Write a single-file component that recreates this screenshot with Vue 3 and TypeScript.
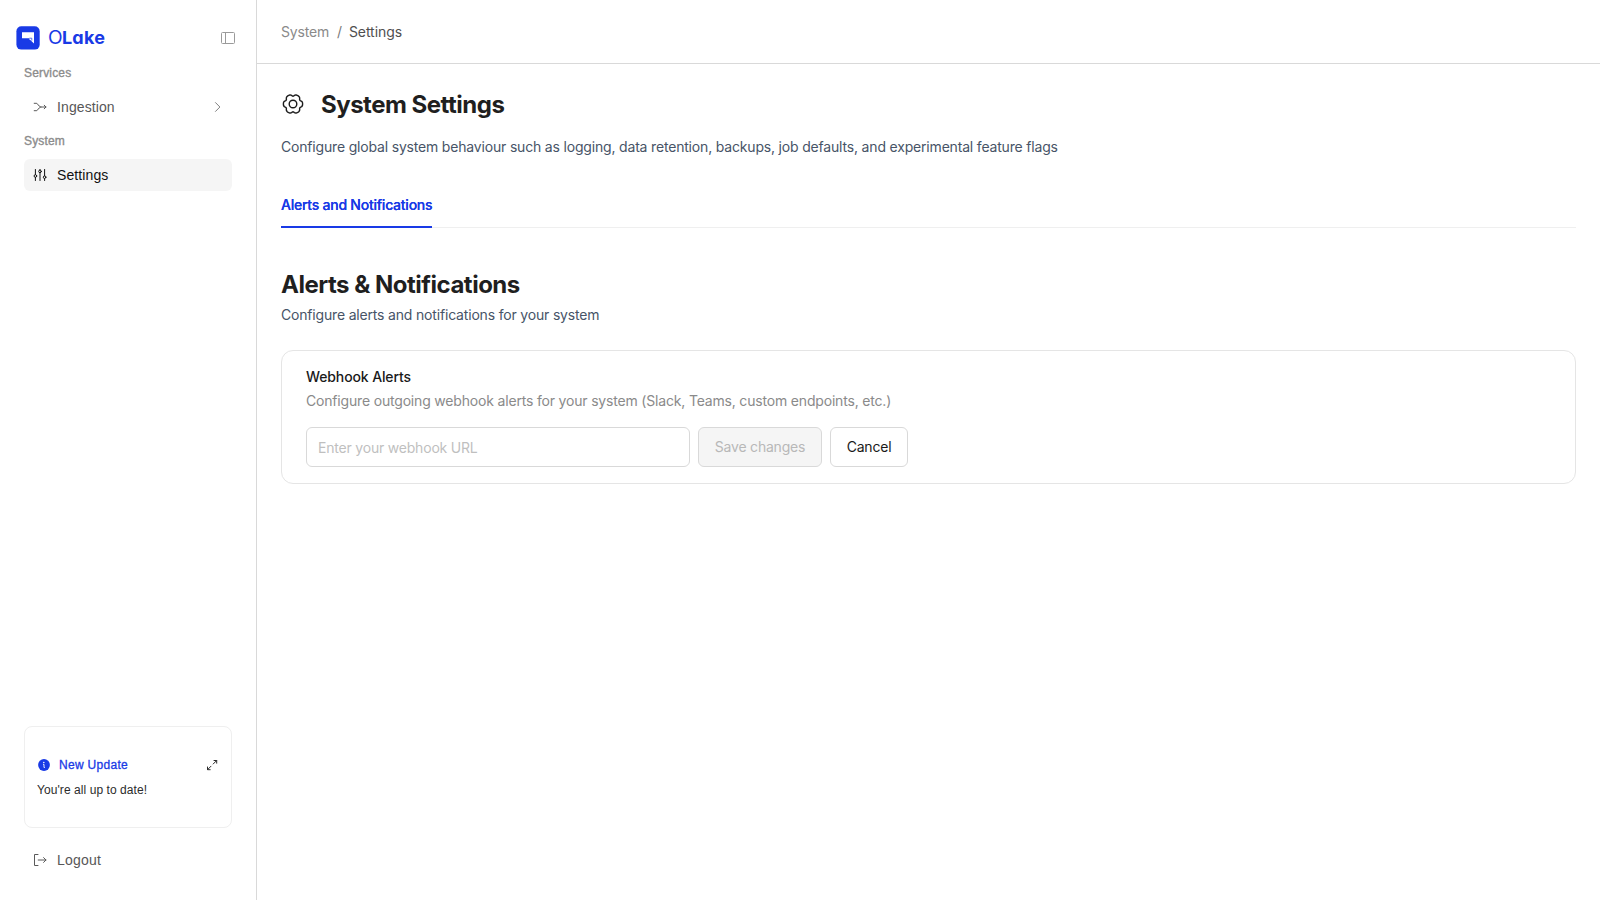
<script setup lang="ts">
import { ref } from 'vue'

const webhookUrl = ref('')

// Outline of the six-lobed gear, sampled in polar coordinates.
const gearOutline = (() => {
  const points: string[] = []
  for (let i = 0; i < 144; i++) {
    const a = (i / 144) * Math.PI * 2
    const dip = Math.pow((1 - Math.cos(6 * a)) / 2, 2.4)
    const r = 9.6 - 1.8 * dip
    points.push(`${(12 + r * Math.cos(a)).toFixed(2)} ${(12 + r * Math.sin(a)).toFixed(2)}`)
  }
  return `M${points.join('L')}Z`
})()
</script>

<template>
  <div class="app">
    <aside class="sidebar">
      <div class="brand">
        <svg class="mark" width="24" height="24" viewBox="0 0 24 24">
          <rect x="0.4" y="0.2" width="23.3" height="23.4" rx="5" fill="#193ae6" />
          <path d="M6 6.2h12v11.4l-4-3.8h-.6v-1.6H6z" fill="#fff" />
          <path d="M13.4 12.2h2.4v2.4" fill="none" stroke="#193ae6" stroke-width=".7" />
        </svg>
        <div class="wordmark"><span class="o">O</span><span class="lake">Lake</span></div>
        <svg class="collapse" width="14" height="12" viewBox="0 0 14 12" fill="none" stroke="#9a9a9a">
          <rect x=".5" y=".5" width="13" height="11" rx="1" />
          <path d="M4.5 .5v11" />
        </svg>
      </div>

      <div class="group">Services</div>
      <a class="item">
        <svg width="14" height="14" viewBox="0 0 14 14" fill="none" stroke="#5a5a5a" stroke-linecap="round" stroke-linejoin="round">
          <path d="M1.2 3.3H3.8L6.2 6Q7 7 8 7H13M1.2 10.7H3.8L6.2 8Q7 7 8 7M11.2 5.2L13 7l-1.8 1.8" />
        </svg>
        <span>Ingestion</span>
        <svg class="chevron" width="8" height="12" viewBox="0 0 8 12" fill="none" stroke="#808080" stroke-linecap="round" stroke-linejoin="round">
          <path d="M1.5 1.6L5.9 6l-4.4 4.4" />
        </svg>
      </a>
      <div class="group">System</div>
      <a class="item active">
        <svg width="14" height="14" viewBox="0 0 14 14" fill="none" stroke="#111" stroke-linecap="round">
          <path d="M2.4 1.5v5M2.4 9.5v3M7 1.5v.3M7 4.8v7.7M11.6 1.5v6.3M11.6 10.8v1.7" />
          <circle cx="2.4" cy="8" r="1.3" />
          <circle cx="7" cy="3.4" r="1.3" />
          <circle cx="11.6" cy="9.2" r="1.3" />
        </svg>
        <span>Settings</span>
      </a>

      <div class="spacer"></div>

      <section class="update">
        <div class="update-head">
          <svg width="12" height="12" viewBox="0 0 12 12">
            <circle cx="6" cy="6" r="5.9" fill="#193ae6" />
            <circle cx="5.8" cy="3.5" r=".75" fill="#fff" />
            <path d="M5.1 5.4H6V8.5H6.8" fill="none" stroke="#fff" stroke-width=".9" />
          </svg>
          <span>New Update</span>
          <svg class="expand" width="12" height="12" viewBox="0 0 12 12" fill="none" stroke="#2b2b2b" stroke-linecap="round" stroke-linejoin="round">
            <path d="M8 1.5h2.7v2.7M10.7 1.5L7.2 5M4.2 10.7H1.5V8M1.5 10.7L5 7.2" />
          </svg>
        </div>
        <p>You're all up to date!</p>
      </section>

      <a class="item logout">
        <svg width="14" height="14" viewBox="0 0 14 14" fill="none" stroke="#5a5a5a" stroke-linecap="round" stroke-linejoin="round">
          <path d="M5 1.5H1.5v11H5M5.2 7H13M10.6 4.6L13 7l-2.4 2.4" />
        </svg>
        <span>Logout</span>
      </a>
    </aside>

    <main class="main">
      <header class="crumbs">
        <span class="c-parent">System</span><span class="c-sep">/</span><span class="c-current">Settings</span>
      </header>

      <div class="content">
        <div class="title">
          <svg width="24" height="24" viewBox="0 0 24 24" fill="none" stroke="#1c1c1c" stroke-width="1.4" stroke-linejoin="round">
            <path :d="gearOutline" />
            <circle cx="12" cy="12" r="3.8" />
          </svg>
          <h1>System Settings</h1>
        </div>
        <p class="lead">Configure global system behaviour such as logging, data retention, backups, job defaults, and experimental feature flags</p>

        <nav class="tabs"><a class="tab">Alerts and Notifications</a></nav>

        <h2>Alerts &amp; Notifications</h2>
        <p class="sub">Configure alerts and notifications for your system</p>

        <section class="card">
          <h3>Webhook Alerts</h3>
          <p class="hint">Configure outgoing webhook alerts for your system (Slack, Teams, custom endpoints, etc.)</p>
          <div class="form">
            <input v-model="webhookUrl" type="text" placeholder="Enter your webhook URL" />
            <button class="save" disabled>Save changes</button>
            <button class="cancel">Cancel</button>
          </div>
        </section>
      </div>
    </main>
  </div>
</template>

<style>
body { margin: 0; }
</style>

<style scoped>
* { box-sizing: border-box; }
h1, h2, h3, p { margin: 0; }
.app {
  display: flex;
  height: 100vh;
  background: #fff;
  font-family: Inter, sans-serif;
  font-size: 14px;
  line-height: 22px;
  letter-spacing: -.18px;
}
.sidebar {
  display: flex;
  flex-direction: column;
  flex: none;
  width: 257px;
  padding: 26px 24px 24px;
  border-right: 1px solid #d9d9d9;
  font-family: "Liberation Sans", sans-serif;
  letter-spacing: .1px;
}
.brand {
  display: flex;
  align-items: center;
  height: 24px;
  margin: 0 -3px 13px -8px;
}
.wordmark {
  display: flex;
  margin-left: 8px;
  color: #193ae6;
  font-family: Inter, sans-serif;
  font-size: 18px;
  line-height: 24px;
  letter-spacing: .2px;
  font-feature-settings: "cv11";
}
.o { display: inline-block; transform: translateX(.4px) scaleX(1.06); }
.lake { font-weight: 700; }
.collapse { margin-left: auto; }
.group {
  height: 20px;
  color: #8c8c8c;
  font-size: 12px;
  line-height: 20px;
  letter-spacing: .17px;
  -webkit-text-stroke: .35px #8c8c8c;
}
.item {
  display: flex;
  flex: none;
  align-items: center;
  height: 32px;
  margin: 8px 0;
  padding: 0 10px 0 9px;
  gap: 10px;
  border-radius: 6px;
  color: #575757;
  line-height: 32px;
}
.item.active { background: #f5f5f5; color: #111; }
.chevron { margin-left: auto; }
.spacer { flex: 1; }
.update {
  flex: none;
  height: 102px;
  padding: 28px 13px 0 12px;
  border: 1px solid #efefef;
  border-radius: 8px;
  font-size: 12px;
  line-height: 20px;
}
.update-head {
  display: flex;
  align-items: center;
  gap: 9px;
  padding-left: 1px;
  margin-bottom: 5px;
  color: #193ae6;
  letter-spacing: .3px;
  -webkit-text-stroke: .3px #193ae6;
}
.expand { margin-left: auto; }
.update p { color: #2b2b2b; letter-spacing: .07px; }
.logout { margin: 16px 0 0; letter-spacing: .2px; }

.main { flex: 1; min-width: 0; }
.crumbs {
  display: flex;
  align-items: center;
  height: 64px;
  padding-left: 24px;
  border-bottom: 1px solid #d9d9d9;
}
.c-parent { color: #8a8a8a; }
.c-sep { margin: 0 7px 0 8px; color: #7a7a7a; }
.c-current { color: #4f4f4f; letter-spacing: -.06px; }
.content { padding: 24px 24px 0; }
.title { display: flex; align-items: center; height: 32px; gap: 16px; }
h1, h2 {
  padding-top: 1px;
  color: #1f1f1f;
  font-size: 24px;
  font-weight: 700;
  line-height: 32px;
  letter-spacing: -.5px;
}
h1 { padding-top: 2px; }
.lead { margin-top: 16px; color: #475467; }
.tabs {
  display: flex;
  height: 46px;
  margin-top: 24px;
  box-shadow: inset 0 -1px #efefef;
}
.tab {
  padding-top: 12px;
  border-bottom: 2px solid #193ae6;
  color: #193ae6;
  font-weight: 500;
  letter-spacing: -.24px;
  text-shadow: 0 0 .25px currentcolor;
}
h2 { margin-top: 40px; }
.sub { margin-top: 3px; color: #475467; }
.card {
  height: 134px;
  margin-top: 24px;
  padding: 15px 24px 0;
  border: 1px solid #e5e5e5;
  border-radius: 12px;
}
h3 { color: #1a1a1a; font-size: 14px; font-weight: 500; line-height: 22px; letter-spacing: -.12px; }
.hint { margin-top: 2px; color: #8a8a8a; }
.form { display: flex; gap: 8px; margin-top: 15px; }
.form > * {
  height: 40px;
  border: 1px solid #d9d9d9;
  border-radius: 6px;
  font-family: inherit;
  font-size: 14px;
  letter-spacing: -.2px;
}
input { width: 384px; padding: 1px 11px 0; outline: none; }
input::placeholder { color: #bfbfbf; }
button { padding: 0 0 2px; background: #fff; white-space: nowrap; }
.save { width: 124px; background: #f5f5f5; color: #b8b8b8; }
.cancel { width: 78px; color: #1a1a1a; }
</style>
